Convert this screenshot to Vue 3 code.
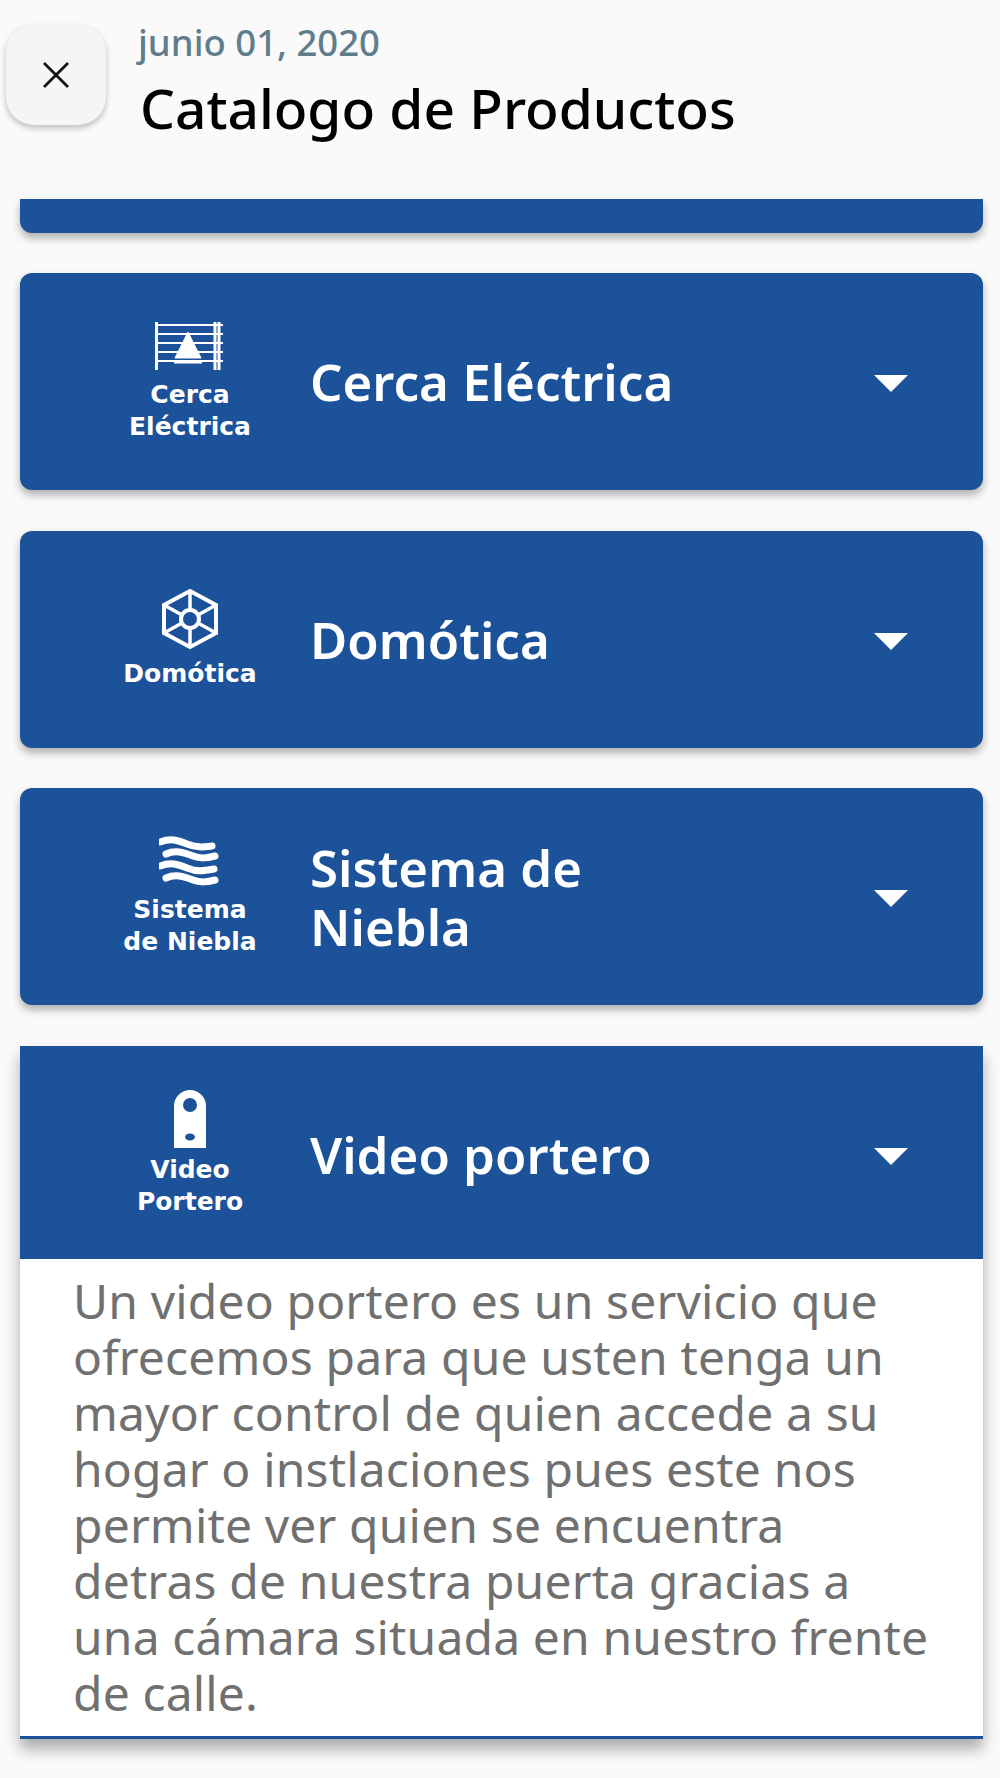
<script setup>
const items = [
  { title: 'Cerca Eléctrica', label: ['Cerca', 'Eléctrica'], icon: 'fence' },
  { title: 'Domótica', label: ['Domótica'], icon: 'hex' },
  { title: 'Sistema de Niebla', label: ['Sistema', 'de Niebla'], icon: 'fog' },
]
</script>

<template>
  <div class="page">
    <header class="top">
      <button class="close">
        <svg width="30" height="30" viewBox="0 0 30 30"><path d="M3 3 L27 27 M27 3 L3 27" stroke="#111" stroke-width="2.8" fill="none" /></svg>
      </button>
      <div class="heading">
        <div class="date">junio 01, 2020</div>
        <div class="title">Catalogo de Productos</div>
      </div>
    </header>
    <div class="list">
      <div class="stub"></div>
      <div v-for="item in items" :key="item.title" class="card">
        <div class="logo">
          <svg v-if="item.icon === 'fence'" width="70" height="50" viewBox="0 0 70 50" fill="none" stroke="#fff">
            <path d="M1.5 1V49M60 1V49M64 1V49" stroke-width="3" />
            <path d="M0 4H68M0 13H68M0 22H68M0 31H68M0 40H68" stroke-width="2" />
            <path d="M33 11L46 37H20Z" fill="#fff" />
            <path d="M19 41H47" stroke-width="3" />
          </svg>
          <svg v-else-if="item.icon === 'hex'" width="58" height="62" viewBox="0 0 58 62" fill="none" stroke="#fff" stroke-width="4">
            <path d="M29 3L55 17V45L29 59L3 45V17Z" />
            <circle cx="29" cy="31" r="9" />
            <path d="M29 3V22M55 17L37 27M55 45L37 35M29 59V40M3 45L21 35M3 17L21 27" stroke-width="3.5" />
          </svg>
          <svg v-else width="62" height="50" viewBox="0 0 62 50" fill="none" stroke="#fff" stroke-width="7" stroke-linecap="round">
            <path d="M1 6C12 2 18 4 28 8C38 12 44 11 53 10" />
            <path d="M7 18C16 14 24 16 34 20C42 23 48 22 56 20" />
            <path d="M1 30C12 26 18 28 28 32C38 36 44 35 55 33" />
            <path d="M7 42C16 38 24 40 34 44C42 47 48 46 56 44" />
          </svg>
          <div class="logo-label"><div v-for="l in item.label" :key="l">{{ l }}</div></div>
        </div>
        <div class="name">{{ item.title }}</div>
        <div class="arrow"></div>
      </div>
      <div class="panel">
        <div class="card open">
          <div class="logo">
            <svg width="32" height="58" viewBox="0 0 32 58">
              <path d="M0 16A16 16 0 0 1 32 16V58H0Z" fill="#fff" />
              <circle cx="16" cy="15" r="7" fill="#1c5299" />
              <ellipse cx="16" cy="47" rx="5" ry="3.5" fill="#1c5299" />
            </svg>
            <div class="logo-label"><div>Video</div><div>Portero</div></div>
          </div>
          <div class="name">Video portero</div>
          <div class="arrow"></div>
        </div>
        <p class="body">Un video portero es un servicio que ofrecemos para que usten tenga un mayor control de quien accede a su hogar o instlaciones pues este nos permite ver quien se encuentra detras de nuestra puerta gracias a una cámara situada en nuestro frente de calle.</p>
      </div>
    </div>
  </div>
</template>

<style>
body { background: #fafafa; }
</style>
<style scoped>
.page {
  width: 1000px;
  height: 1778px;
  overflow: hidden;
  background: #fafafa;
  font-family: "Noto Sans", sans-serif;
}
.top {
  display: flex;
  height: 199px;
  padding-left: 6px;
  box-sizing: border-box;
}
.close {
  width: 100px;
  height: 100px;
  margin-top: 25px;
  border: none;
  border-radius: 28px;
  background: #f5f5f5;
  box-shadow: 0 3px 6px rgba(0, 0, 0, 0.25);
  display: flex;
  align-items: center;
  justify-content: center;
}
.heading { margin-left: 32px; }
.date { font-size: 36.5px; color: #607d8b; font-weight: 500; line-height: 42px; margin-top: 21px; }
.title { font-size: 55px; color: #000; line-height: 70px; margin: 10px 0 0 2px; font-weight: 500; }
.list { padding: 0 17px 0 20px; }
.stub {
  height: 34px;
  background: #1c5299;
  border-radius: 0 0 12px 12px;
  box-shadow: 0 5px 9px rgba(0, 0, 0, 0.3);
  margin-bottom: 40px;
}
.card {
  height: 217px;
  display: flex;
  align-items: center;
  background: #1c5299;
  border-radius: 12px;
  box-shadow: 0 5px 9px rgba(0, 0, 0, 0.3);
  margin-bottom: 40.5px;
  color: #fff;
}
.logo {
  flex: 0 0 220px;
  margin-left: 60px;
  margin-right: 10px;
  display: flex;
  flex-direction: column;
  align-items: center;
}
.logo-label { font-family: "DejaVu Sans", sans-serif; font-size: 25px; font-weight: 700; line-height: 32px; text-align: center; margin-top: 8px; }
.name { width: 375px; font-size: 51px; font-weight: 600; line-height: 59px; }
.arrow {
  margin-left: auto;
  margin-right: 75px;
  margin-top: 4px;
  border-left: 17px solid transparent;
  border-right: 17px solid transparent;
  border-top: 17px solid #fff;
}
.panel {
  background: #fff;
  border-bottom: 3px solid #1c5299;
  box-shadow: 0 10px 14px rgba(0, 0, 0, 0.32);
}
.open {
  border-radius: 0;
  box-shadow: none;
  margin-bottom: 0;
  box-sizing: border-box;
  height: 213px;
  padding-top: 4px;
}
.open .logo-label { margin-top: 6px; }
.body {
  margin: 0;
  padding: 14px 49px 15px 53px;
  font-size: 48px;
  letter-spacing: 0.15px;
  line-height: 56px;
  color: #707070;
}
</style>
